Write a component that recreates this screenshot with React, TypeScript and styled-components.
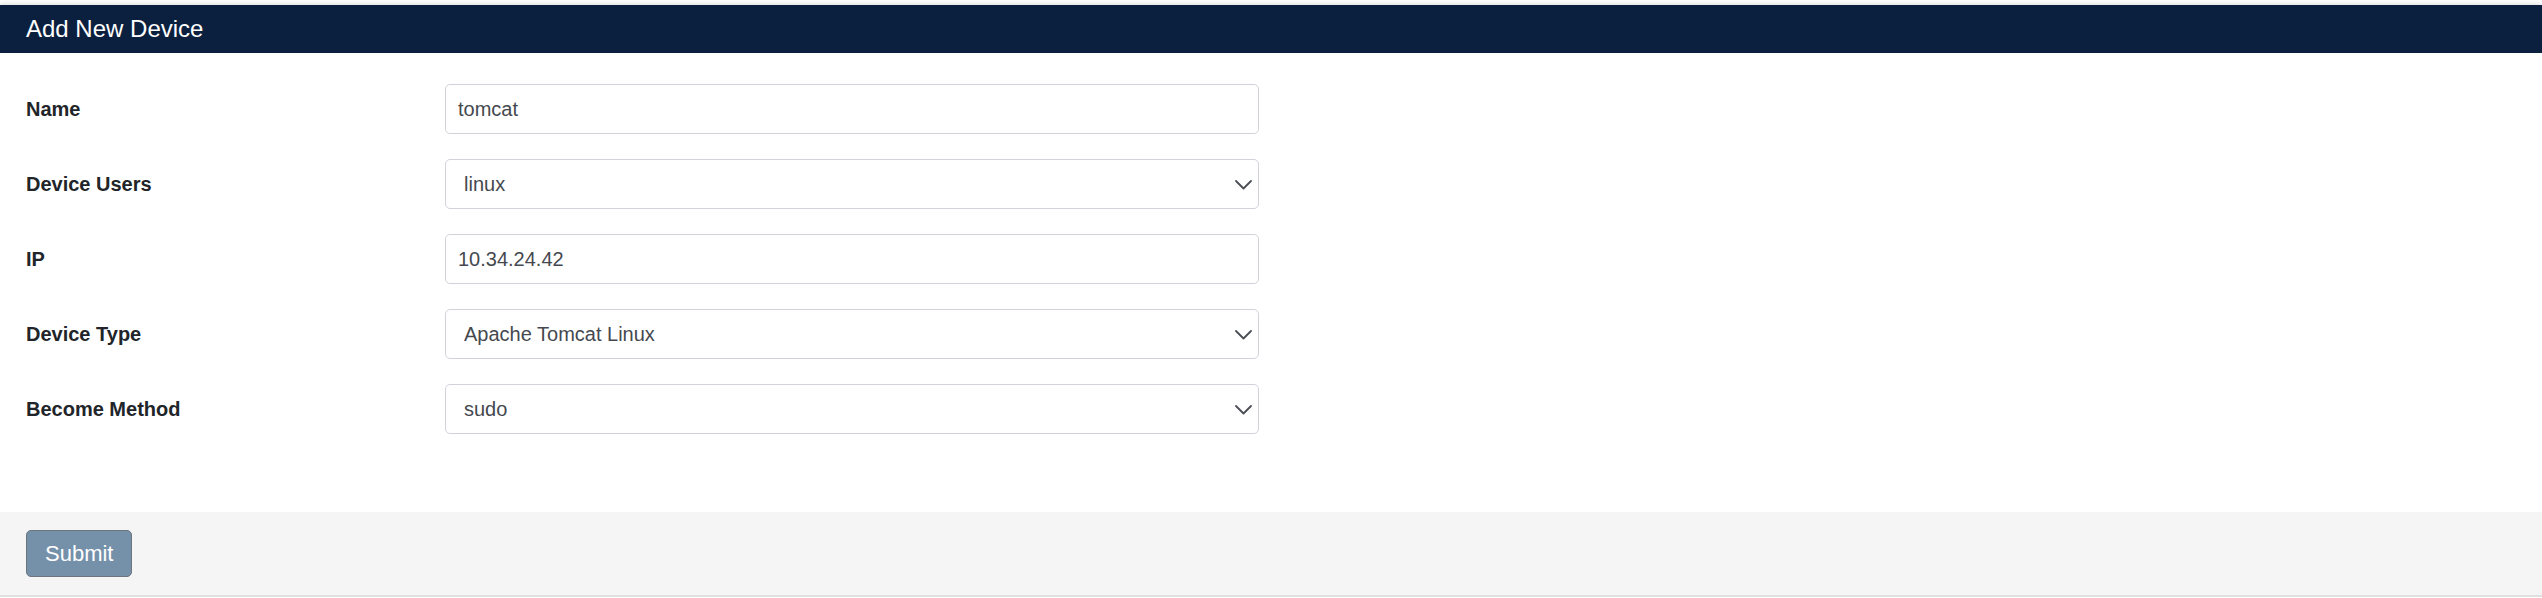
import React from "react";
import styled, { createGlobalStyle } from "styled-components";

const GlobalStyle = createGlobalStyle`
  html, body {
    margin: 0;
    padding: 0;
    background: #ffffff;
    font-family: "Liberation Sans", Arial, sans-serif;
  }
  * { box-sizing: border-box; }
`;

const Page = styled.div`
  padding-top: 5px;
  width: 100%;
`;

const Card = styled.section`
  background: #ffffff;
  box-shadow: 0 -1px 5px rgba(0, 0, 0, 0.14);
`;

const Header = styled.header`
  height: 48px;
  background: #0b1f3e;
  color: #ffffff;
  display: flex;
  align-items: center;
  padding: 0 26px;
`;

const Title = styled.h2`
  margin: 0;
  font-family: "Liberation Sans", Arial, sans-serif;
  font-size: 24px;
  font-weight: 400;
  line-height: 28px;
`;

const Body = styled.form`
  padding: 31px 26px 78px;
  display: flex;
  flex-direction: column;
  gap: 25px;
`;

const Row = styled.div`
  display: grid;
  grid-template-columns: 419px 814px;
  align-items: center;
`;

const Label = styled.label`
  font-family: "Liberation Sans", Arial, sans-serif;
  font-size: 20px;
  font-weight: 700;
  color: #212529;
  line-height: 24px;
`;

const fieldBase = `
  width: 100%;
  height: 50px;
  border: 1px solid #d0d4da;
  border-radius: 5px;
  background: #ffffff;
  font-family: "Liberation Sans", Arial, sans-serif;
  font-size: 20px;
  color: #45494f;
  outline: none;
  margin: 0;
`;

const TextInput = styled.input`
  ${fieldBase}
  padding: 0 12px;
`;

const SelectWrap = styled.div`
  position: relative;
  width: 100%;
`;

const Select = styled.select`
  ${fieldBase}
  appearance: none;
  -webkit-appearance: none;
  padding: 0 40px 0 18px;
`;

const Chevron = styled.svg`
  position: absolute;
  right: 7px;
  top: 50%;
  width: 17px;
  height: 10px;
  margin-top: -4px;
  pointer-events: none;
`;

const Footer = styled.footer`
  background: #f5f5f5;
  padding: 18px 26px;
  border-bottom: 2px solid #e0e0e0;
`;

const SubmitButton = styled.button`
  height: 47px;
  padding: 0 18px;
  background: #7590a9;
  border: 1px solid #6b7580;
  border-radius: 5px;
  color: #ffffff;
  font-family: "Liberation Sans", Arial, sans-serif;
  font-size: 22px;
  line-height: 25px;
  cursor: pointer;
`;

type Field =
  | { label: string; kind: "input"; value: string }
  | { label: string; kind: "select"; value: string };

const fields: Field[] = [
  { label: "Name", kind: "input", value: "tomcat" },
  { label: "Device Users", kind: "select", value: "linux" },
  { label: "IP", kind: "input", value: "10.34.24.42" },
  { label: "Device Type", kind: "select", value: "Apache Tomcat Linux" },
  { label: "Become Method", kind: "select", value: "sudo" },
];

function ChevronIcon() {
  return (
    <Chevron viewBox="0 0 17 10" fill="none">
      <polyline
        points="1,1 8.5,8.5 16,1"
        stroke="#4a4f56"
        strokeWidth="1.8"
        strokeLinecap="round"
        strokeLinejoin="round"
      />
    </Chevron>
  );
}

export default function App() {
  return (
    <>
      <GlobalStyle />
      <Page>
        <Card>
          <Header>
            <Title>Add New Device</Title>
          </Header>
          <Body onSubmit={(e) => e.preventDefault()}>
            {fields.map((f) => (
              <Row key={f.label}>
                <Label>{f.label}</Label>
                {f.kind === "input" ? (
                  <TextInput readOnly value={f.value} />
                ) : (
                  <SelectWrap>
                    <Select value={f.value} onChange={() => {}}>
                      <option value={f.value}>{f.value}</option>
                    </Select>
                    <ChevronIcon />
                  </SelectWrap>
                )}
              </Row>
            ))}
          </Body>
          <Footer>
            <SubmitButton type="button">Submit</SubmitButton>
          </Footer>
        </Card>
      </Page>
    </>
  );
}
